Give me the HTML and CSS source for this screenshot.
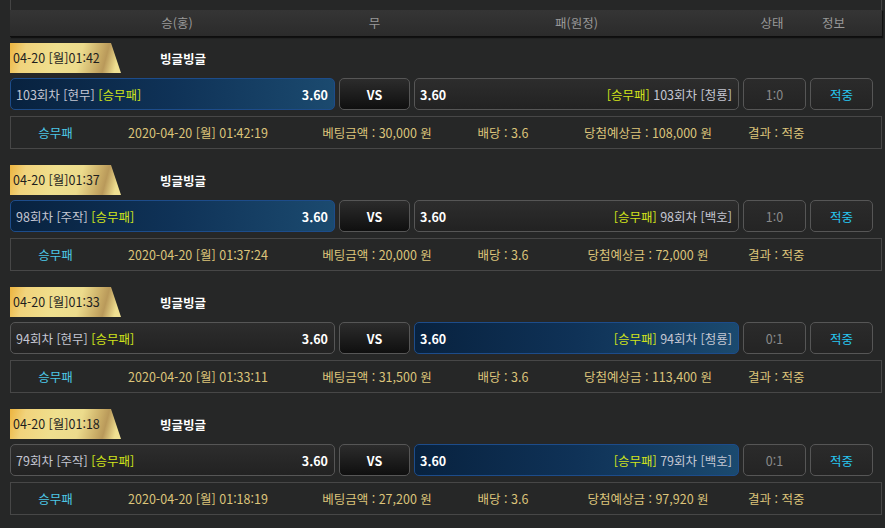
FILE: index.html
```html
<!DOCTYPE html>
<html lang="ko">
<head>
<meta charset="utf-8">
<link rel="stylesheet" href="styles.css">
</head>
<body>
<div class="wrap">
  <div class="top-stub"></div>
  <div class="thead">
    <div class="th th-home">승(홍)</div>
    <div class="th">무</div>
    <div class="th th-away">패(원정)</div>
    <div class="th th-state">상태</div>
    <div class="th th-info">정보</div>
  </div>

  <div class="group">
    <div class="title-row"><div class="badge">04-20 [월]01:42</div><div class="game">빙글빙글</div></div>
    <div class="bet-row">
      <div class="team home sel"><span class="name">103회차 [현무] <em>[승무패]</em></span><b>3.60</b></div>
      <div class="vs">VS</div>
      <div class="team away"><b>3.60</b><span class="name"><em>[승무패]</em> 103회차 [청룡]</span></div>
      <div class="score">1:0</div>
      <div class="result">적중</div>
    </div>
    <div class="info-row">
      <span class="c1">승무패</span><span class="c2">2020-04-20 [월] 01:42:19</span><span class="c3">베팅금액 : 30,000 원</span><span class="c4">배당 : 3.6</span><span class="c5">당첨예상금 : 108,000 원</span><span class="c6">결과 : 적중</span>
    </div>
  </div>

  <div class="group">
    <div class="title-row"><div class="badge">04-20 [월]01:37</div><div class="game">빙글빙글</div></div>
    <div class="bet-row">
      <div class="team home sel"><span class="name">98회차 [주작] <em>[승무패]</em></span><b>3.60</b></div>
      <div class="vs">VS</div>
      <div class="team away"><b>3.60</b><span class="name"><em>[승무패]</em> 98회차 [백호]</span></div>
      <div class="score">1:0</div>
      <div class="result">적중</div>
    </div>
    <div class="info-row">
      <span class="c1">승무패</span><span class="c2">2020-04-20 [월] 01:37:24</span><span class="c3">베팅금액 : 20,000 원</span><span class="c4">배당 : 3.6</span><span class="c5">당첨예상금 : 72,000 원</span><span class="c6">결과 : 적중</span>
    </div>
  </div>

  <div class="group">
    <div class="title-row"><div class="badge">04-20 [월]01:33</div><div class="game">빙글빙글</div></div>
    <div class="bet-row">
      <div class="team home"><span class="name">94회차 [현무] <em>[승무패]</em></span><b>3.60</b></div>
      <div class="vs">VS</div>
      <div class="team away sel"><b>3.60</b><span class="name"><em>[승무패]</em> 94회차 [청룡]</span></div>
      <div class="score">0:1</div>
      <div class="result">적중</div>
    </div>
    <div class="info-row">
      <span class="c1">승무패</span><span class="c2">2020-04-20 [월] 01:33:11</span><span class="c3">베팅금액 : 31,500 원</span><span class="c4">배당 : 3.6</span><span class="c5">당첨예상금 : 113,400 원</span><span class="c6">결과 : 적중</span>
    </div>
  </div>

  <div class="group">
    <div class="title-row"><div class="badge">04-20 [월]01:18</div><div class="game">빙글빙글</div></div>
    <div class="bet-row">
      <div class="team home"><span class="name">79회차 [주작] <em>[승무패]</em></span><b>3.60</b></div>
      <div class="vs">VS</div>
      <div class="team away sel"><b>3.60</b><span class="name"><em>[승무패]</em> 79회차 [백호]</span></div>
      <div class="score">0:1</div>
      <div class="result">적중</div>
    </div>
    <div class="info-row">
      <span class="c1">승무패</span><span class="c2">2020-04-20 [월] 01:18:19</span><span class="c3">베팅금액 : 27,200 원</span><span class="c4">배당 : 3.6</span><span class="c5">당첨예상금 : 97,920 원</span><span class="c6">결과 : 적중</span>
    </div>
  </div>
</div>
</body>
</html>
```

FILE: styles.css
```css
* { box-sizing: border-box; }
html, body {
  margin: 0;
  background: #262727;
}
body {
  font-family: "Noto Sans CJK KR", "Noto Sans", sans-serif;
  font-size: 12.5px;
  color: #ccc;
  height: 528px;
  overflow: hidden;
}
.wrap {
  margin-left: 10px;
  width: 872px;
}
.top-stub {
  height: 10px;
  border-left: 1px solid #444;
  border-right: 1px solid #444;
}
.thead {
  height: 27px;
  display: grid;
  grid-template-columns: 325px 71px 325px 63px 63px;
  column-gap: 4px;
  align-items: center;
  background: linear-gradient(#353535, #2b2b2b);
  border-bottom: 1px solid #0e0e0e;
  box-shadow: 1px 1px 1px #111;
  color: #999;
  line-height: 26px;
}
.th { text-align: center; }
.th-home { padding-left: 9px; }
.th-state { padding-right: 5px; }
.th-info { padding-right: 16px; }

.group { padding-top: 6px; padding-bottom: 10px; }
.title-row {
  display: flex;
  align-items: center;
  height: 30px;
}
.badge {
  width: 111px;
  height: 30px;
  line-height: 30px;
  padding-left: 3px;
  color: #1e1e1e;
  font-size: 12.5px;
  white-space: nowrap;
  clip-path: polygon(0 0, 101px 0, 111px 100%, 0 100%);
  background: linear-gradient(105deg, #ecb43f 0%, #f1d37c 14%, #efdf8e 40%, #ecdb8c 62%, #c9ac66 78%, #b9995a 84%, #efdf90 94%, #f1e194 100%);
}
.game {
  margin-left: 39px;
  color: #fff;
  font-weight: bold;
  font-size: 12.5px;
}
.bet-row {
  margin-top: 5px;
  display: grid;
  grid-template-columns: 325px 71px 325px 63px 63px;
  column-gap: 4px;
  height: 32px;
}
.team, .vs, .score, .result {
  border: 1px solid #565656;
  border-radius: 5px;
  display: flex;
  align-items: center;
  height: 32px;
}
.team {
  justify-content: space-between;
  padding: 0 6px 0 5px;
  background: linear-gradient(#2d2d2d, #222);
  white-space: nowrap;
}
.team.sel {
  border-color: #1d4c8a;
  background: linear-gradient(90deg, #08223f 0%, #0f3257 50%, #1b4a6f 100%);
}
.team b { color: #fff; font-weight: bold; font-size: 12.5px; }
.team .name { color: #c4c6d2; }
.team em { font-style: normal; color: #cfe31a; }
.vs {
  justify-content: center;
  color: #fff;
  font-weight: bold;
  background: linear-gradient(#2c2c2c, #0f0f0f);
}
.score {
  justify-content: center;
  color: #8a8a8a;
  background: linear-gradient(#2b2b2b, #242424);
}
.result {
  justify-content: center;
  color: #27c6f0;
  background: linear-gradient(#2b2b2b, #242424);
}
.info-row {
  margin-top: 6px;
  height: 33px;
  border: 1px solid #474747;
  display: flex;
  align-items: center;
  color: #dcc47a;
  white-space: nowrap;
}
.info-row span { text-align: center; flex: none; }
.c1 { width: 89px; color: #4cc6e6; }
.c2 { width: 196px; }
.c3 { width: 162px; }
.c4 { width: 90px; }
.c5 { width: 200px; }
.c6 { width: 56px; }
```
